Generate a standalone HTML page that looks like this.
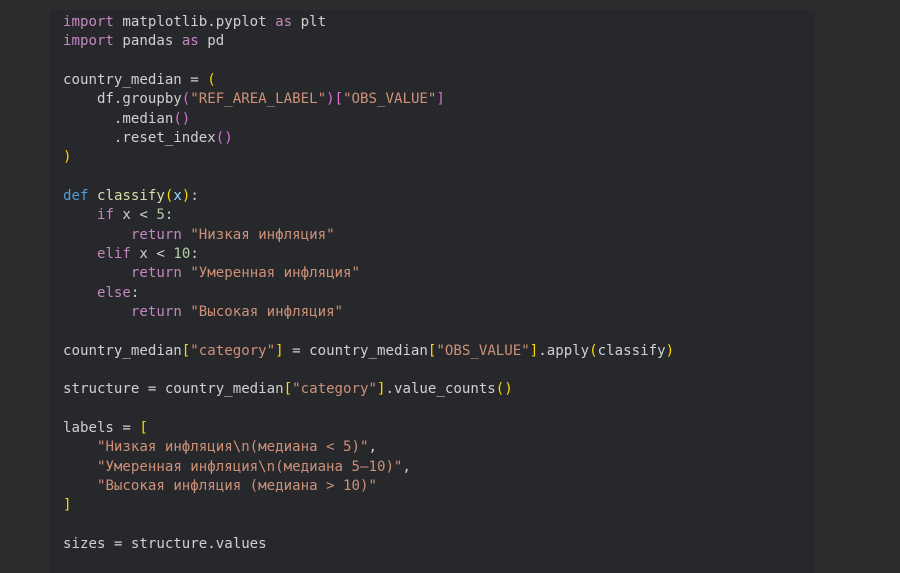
<!DOCTYPE html>
<html><head><meta charset="utf-8"><style>
html,body{margin:0;padding:0;background:#2c2c2d;width:900px;height:573px;overflow:hidden}
.p{position:absolute;left:50px;top:10px;width:765px;height:563px;background:#26282b}
pre{position:absolute;left:63px;top:13px;margin:0;font-family:"DejaVu Sans Mono","Liberation Mono",monospace;font-size:14.1px;line-height:19.33px;color:#d0d0d0;white-space:pre}
.k{color:#c586c0}.s{color:#ce9178}.y{color:#ffd700}.m{color:#da70d6}.b{color:#569cd6}.f{color:#dcdcaa}.v{color:#9cdcfe}.n{color:#b5cea8}
</style></head><body><div class="p"></div><pre><span class="k">import</span> matplotlib.pyplot <span class="k">as</span> plt
<span class="k">import</span> pandas <span class="k">as</span> pd

country_median = <span class="y">(</span>
    df.groupby<span class="m">(</span><span class="s">"REF_AREA_LABEL"</span><span class="m">)</span><span class="m">[</span><span class="s">"OBS_VALUE"</span><span class="m">]</span>
      .median<span class="m">()</span>
      .reset_index<span class="m">()</span>
<span class="y">)</span>

<span class="b">def</span> <span class="f">classify</span><span class="y">(</span><span class="v">x</span><span class="y">)</span>:
    <span class="k">if</span> x &lt; <span class="n">5</span>:
        <span class="k">return</span> <span class="s">"Низкая инфляция"</span>
    <span class="k">elif</span> x &lt; <span class="n">10</span>:
        <span class="k">return</span> <span class="s">"Умеренная инфляция"</span>
    <span class="k">else</span>:
        <span class="k">return</span> <span class="s">"Высокая инфляция"</span>

country_median<span class="y">[</span><span class="s">"category"</span><span class="y">]</span> = country_median<span class="y">[</span><span class="s">"OBS_VALUE"</span><span class="y">]</span>.apply<span class="y">(</span>classify<span class="y">)</span>

structure = country_median<span class="y">[</span><span class="s">"category"</span><span class="y">]</span>.value_counts<span class="y">()</span>

labels = <span class="y">[</span>
    <span class="s">"Низкая инфляция\n(медиана &lt; 5)"</span>,
    <span class="s">"Умеренная инфляция\n(медиана 5–10)"</span>,
    <span class="s">"Высокая инфляция (медиана &gt; 10)"</span>
<span class="y">]</span>

sizes = structure.values</pre></body></html>
